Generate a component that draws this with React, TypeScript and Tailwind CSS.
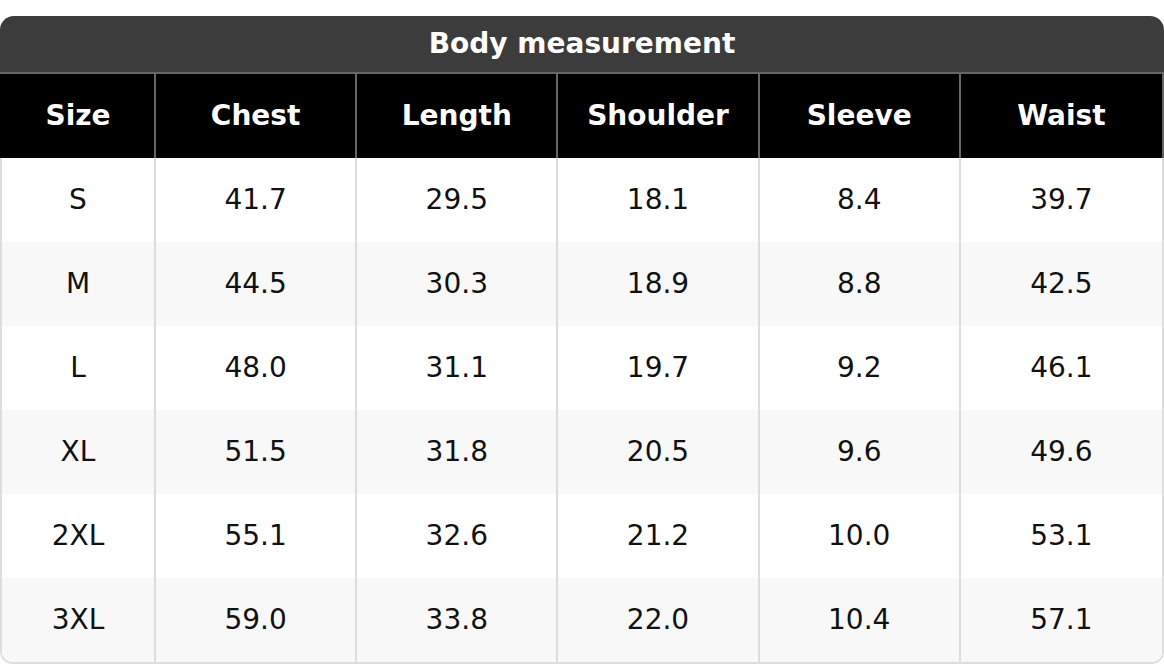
import React from "react";

const headers = ["Size", "Chest", "Length", "Shoulder", "Sleeve", "Waist"];

const rows = [
  ["S", "41.7", "29.5", "18.1", "8.4", "39.7"],
  ["M", "44.5", "30.3", "18.9", "8.8", "42.5"],
  ["L", "48.0", "31.1", "19.7", "9.2", "46.1"],
  ["XL", "51.5", "31.8", "20.5", "9.6", "49.6"],
  ["2XL", "55.1", "32.6", "21.2", "10.0", "53.1"],
  ["3XL", "59.0", "33.8", "22.0", "10.4", "57.1"],
];

const cols = "grid grid-cols-[154px_repeat(5,1fr)]";

export default function App() {
  return (
    <div
      className="bg-white pt-4 w-[1164px] h-[664px]"
      style={{ fontFamily: '"DejaVu Sans", Verdana, sans-serif' }}
    >
      <div className="rounded-t-[14px] rounded-b-[12px] overflow-hidden">
        <div className="h-[58px] bg-[#3c3c3c] border-b-2 border-[#666] flex items-center justify-center text-white font-bold text-[28px]">
          Body measurement
        </div>

        <div className={`${cols} bg-black border-l-2 border-l-black border-r-2 border-r-[#666]`}>
          {headers.map((h, i) => (
            <div
              key={h}
              className={`h-[84px] flex items-center justify-center text-white font-bold text-[28px] ${
                i < headers.length - 1 ? "border-r-2 border-[#666]" : ""
              }`}
            >
              {h}
            </div>
          ))}
        </div>

        <div className="border-x-2 border-b-2 border-[#dddddd] rounded-b-[12px] overflow-hidden">
          {rows.map((row, r) => (
            <div
              key={row[0]}
              className={`${cols} ${r % 2 === 1 ? "bg-[#f8f8f8]" : "bg-white"}`}
            >
              {row.map((v, i) => (
                <div
                  key={i}
                  className={`h-[84px] flex items-center justify-center text-[#111] text-[28px] ${
                    i < row.length - 1 ? "border-r-2 border-[#dddddd]" : ""
                  }`}
                >
                  {v}
                </div>
              ))}
            </div>
          ))}
        </div>
      </div>
    </div>
  );
}
